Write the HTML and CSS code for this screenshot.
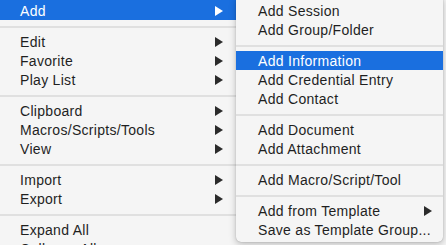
FILE: index.html
```html
<!DOCTYPE html>
<html>
<head>
  <title>Context Menu</title>
  <link rel="stylesheet" href="styles.css">
</head>
<body>
  <div class="menu">
    <div class="item first active">Add <span class="arrow"></span></div>
    <div class="sep"></div>
    <div class="item">Edit <span class="arrow"></span></div>
    <div class="item">Favorite <span class="arrow"></span></div>
    <div class="item">Play List <span class="arrow"></span></div>
    <div class="sep"></div>
    <div class="item">Clipboard <span class="arrow"></span></div>
    <div class="item">Macros/Scripts/Tools <span class="arrow"></span></div>
    <div class="item">View <span class="arrow"></span></div>
    <div class="sep"></div>
    <div class="item">Import <span class="arrow"></span></div>
    <div class="item">Export <span class="arrow"></span></div>
    <div class="sep"></div>
    <div class="item">Expand All</div>
    <div class="item">Collapse All</div>
  </div>

  <div class="submenu">
    <div class="item">Add Session</div>
    <div class="item">Add Group/Folder</div>
    <div class="sep"></div>
    <div class="item active">Add Information</div>
    <div class="item">Add Credential Entry</div>
    <div class="item">Add Contact</div>
    <div class="sep"></div>
    <div class="item">Add Document</div>
    <div class="item">Add Attachment</div>
    <div class="sep"></div>
    <div class="item">Add Macro/Script/Tool</div>
    <div class="sep"></div>
    <div class="item">Add from Template <span class="arrow"></span></div>
    <div class="item">Save as Template Group...</div>
  </div>
</body>
</html>
```
FILE: styles.css
```css
:root {
  --bg: #f5f5f5;
  --text: #1f1f1f;
  --accent: #1a6fdf;
  --line: #e0e0e0;
  --font: "Liberation Sans", Arial, sans-serif;
}
html, body {
  margin: 0;
  height: 100%;
  overflow: hidden;
}
body {
  position: relative;
  background: var(--bg);
  font-family: var(--font);
  font-size: 14px;
  letter-spacing: 0.3px;
  color: var(--text);
}
.menu {
  width: 300px;
  background: var(--bg);
}
.item {
  display: flex;
  align-items: center;
  justify-content: space-between;
  box-sizing: border-box;
  height: 19px;
  padding-top: 2px;
  line-height: 17px;
  white-space: nowrap;
}
.menu .item {
  padding-left: 20px;
  padding-right: 77px;
}
.menu .item.first {
  height: 20px;
  padding-top: 3px;
  width: 236px;
  padding-right: 13px;
}
.active {
  background: var(--accent);
  color: white;
}
.sep {
  height: 2px;
  margin: 6px 0 4px;
  background: var(--line);
}
.arrow {
  width: 0;
  height: 0;
  margin-top: -1px;
  border-top: 5px solid transparent;
  border-bottom: 5px solid transparent;
  border-left: 8px solid #2b2b2b;
}
.active .arrow {
  border-left-color: white;
}
.submenu {
  position: absolute;
  left: 236px;
  top: -4px;
  width: 207px;
  padding: 5px 0 3px;
  background: var(--bg);
  border-radius: 5px;
  box-shadow: 0 0 1px rgba(0, 0, 0, 0.35), 0 2px 7px rgba(0, 0, 0, 0.25);
}
.submenu .item {
  padding-left: 22px;
  padding-right: 11px;
}
```
